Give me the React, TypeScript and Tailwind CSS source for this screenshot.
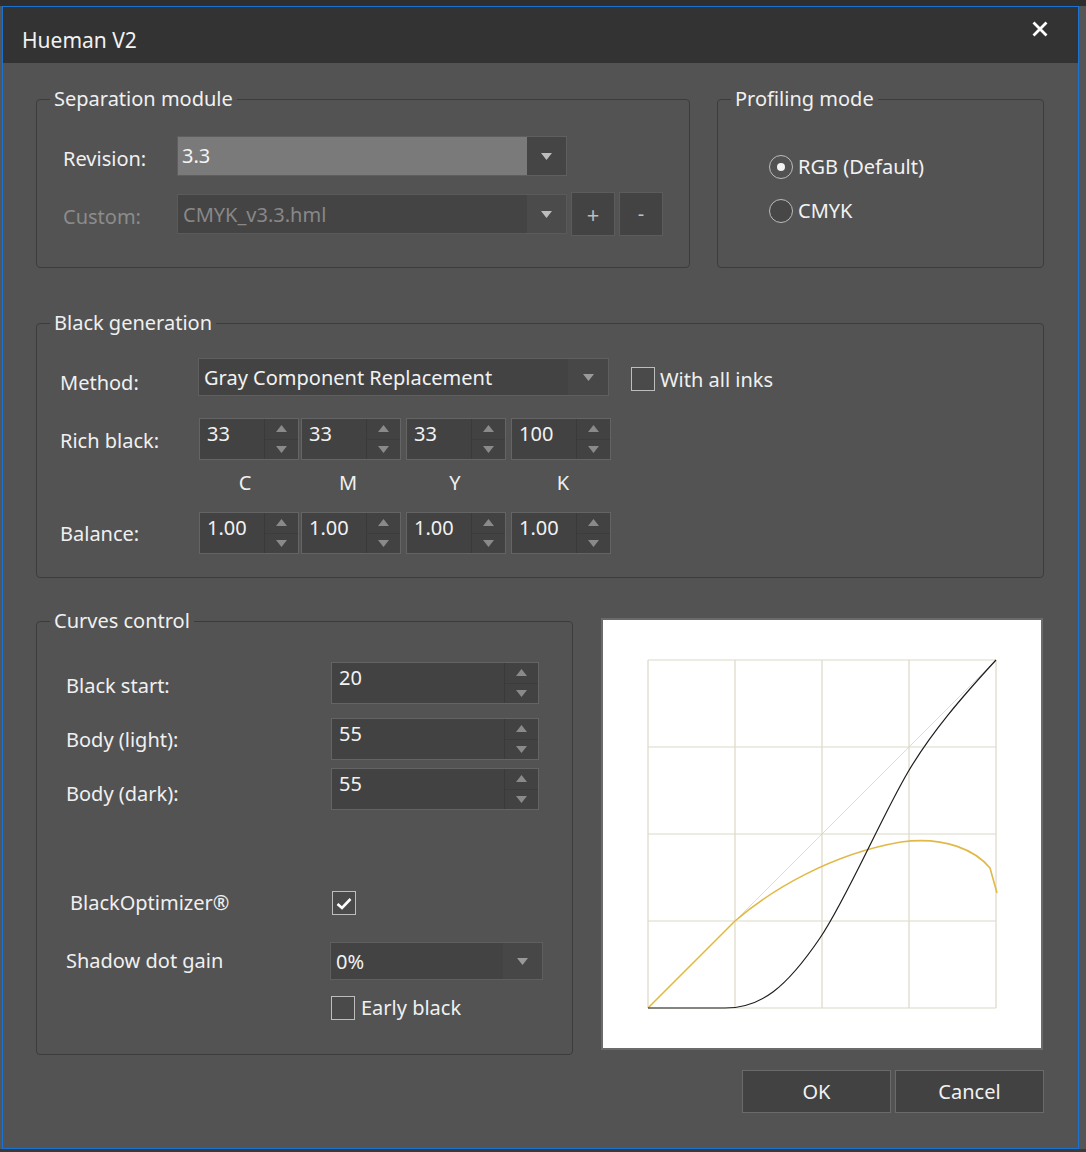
import React from "react";

function Tri({ up = false, color = "#bdbdbd" }: { up?: boolean; color?: string }) {
  return (
    <svg width="11" height="7" viewBox="0 0 11 7">
      <path d={up ? "M0 7 L5.5 0 L11 7 Z" : "M0 0 L11 0 L5.5 7 Z"} fill={color} />
    </svg>
  );
}

function Spin({ value, className = "w-[100px]" }: { value: string; className?: string }) {
  return (
    <div className={`h-[42px] flex border border-[#646464] bg-[#424242] ${className}`}>
      <div className="flex-1 pl-[7px] pt-[1px] text-[20px] leading-[28px] text-[#f2f2f2]">{value}</div>
      <div className="w-[34px] flex flex-col border-l border-[#3a3a3a]">
        <div className="flex-1 flex items-center justify-center border-b border-[#3c3c3c]">
          <Tri up color="#8a8a8a" />
        </div>
        <div className="flex-1 flex items-center justify-center">
          <Tri color="#8a8a8a" />
        </div>
      </div>
    </div>
  );
}

function Check({ checked = false }: { checked?: boolean }) {
  return (
    <div className="w-[24px] h-[24px] border border-[#bdbdbd] bg-[#4a4a4a] flex items-center justify-center">
      {checked && (
        <svg width="16" height="13" viewBox="0 0 16 13">
          <path d="M1.5 7 L6 11 L14.5 2" stroke="#ffffff" strokeWidth="2.6" fill="none" />
        </svg>
      )}
    </div>
  );
}

function Radio({ checked = false, label }: { checked?: boolean; label: string }) {
  return (
    <div className="flex items-center h-[24px]">
      <div
        className={`w-[24px] h-[24px] rounded-full border border-[#bdbdbd] flex items-center justify-center ${
          checked ? "bg-[#525252]" : "bg-[#474747]"
        }`}
      >
        {checked && <div className="w-[8px] h-[8px] rounded-full bg-[#f2f2f2]" />}
      </div>
      <span className="ml-[5px] text-[20px] leading-[24px] text-[#f2f2f2]">{label}</span>
    </div>
  );
}

function Group({
  title,
  className,
  children,
}: {
  title: string;
  className: string;
  children: React.ReactNode;
}) {
  return (
    <fieldset className={`border border-[#3c3c3c] rounded-[4px] ${className}`}>
      <legend className="ml-[13px] px-[4px] text-[20px] leading-[24px] text-[#f0f0f0]">{title}</legend>
      {children}
    </fieldset>
  );
}

const label = "text-[20px] leading-[24px] text-[#f0f0f0]";

export default function App() {
  const rich = ["33", "33", "33", "100"];
  const bal = ["1.00", "1.00", "1.00", "1.00"];
  const gaps = ["", "ml-[2px]", "ml-[5px]", "ml-[5px]"];
  const letters = [
    { c: "C", cls: "pr-[8px]" },
    { c: "M", cls: "ml-[2px] pr-[6px]" },
    { c: "Y", cls: "ml-[5px] pr-[2px]" },
    { c: "K", cls: "ml-[5px] pl-[4px]" },
  ];

  return (
    <div className="w-[1086px] h-[1152px] bg-[#555555] flex flex-col font-['Noto_Sans',sans-serif]">
      <div className="h-[6px] bg-[#2e2e2e] shrink-0" />
      <div className="ml-[2px] w-[1077px] h-[1143px] shrink-0 border border-[#1a73d0] flex flex-col bg-[#535353]">
        {/* title bar */}
        <div className="h-[56px] bg-[#333333] flex justify-between shrink-0">
          <div className="pl-[19px] pt-[21px] text-[21px] leading-[24px] text-[#f2f2f2]">Hueman V2</div>
          <div className="pr-[30px] pt-[14px]">
            <svg width="16" height="16" viewBox="0 0 16 16">
              <path d="M1.5 1.5 L14.5 14.5 M14.5 1.5 L1.5 14.5" stroke="#ffffff" strokeWidth="2.8" />
            </svg>
          </div>
        </div>

        <div className="pl-[33px] pt-[24px] flex flex-col">
          {/* row 1 */}
          <div className="flex">
            <Group title="Separation module" className="w-[654px] h-[181px]">
              <div className="pl-[26px] pt-[25px] flex flex-col">
                <div className="flex items-center h-[40px]">
                  <div className={`w-[114px] pt-[5px] ${label}`}>Revision:</div>
                  <div className="w-[390px] h-[40px] flex border border-[#5f5f5f]">
                    <div className="flex-1 bg-[#7a7a7a] pl-[4px] pt-[1px] text-[20px] leading-[36px] text-[#f4f4f4]">3.3</div>
                    <div className="w-[39px] bg-[#454545] flex items-center justify-center">
                      <Tri />
                    </div>
                  </div>
                </div>
                <div className="flex items-center h-[44px] mt-[16px]">
                  <div className="w-[114px] pt-[6px] text-[20px] leading-[24px] text-[#8c8c8c]">Custom:</div>
                  <div className="w-[390px] h-[40px] flex border border-[#5a5a5a] bg-[#444444]">
                    <div className="flex-1 pl-[5px] pt-[1px] text-[20px] leading-[38px] text-[#888888]">CMYK_v3.3.hml</div>
                    <div className="w-[39px] bg-[#4b4b4b] flex items-center justify-center">
                      <Tri />
                    </div>
                  </div>
                  <div className="ml-[4px] w-[44px] h-[44px] bg-[#434343] border border-[#5c5c5c] flex items-center justify-center text-[22px] text-[#bdbdbd]">
                    +
                  </div>
                  <div className="ml-[4px] w-[44px] h-[44px] bg-[#434343] border border-[#5c5c5c] flex items-center justify-center text-[20px] text-[#bdbdbd]">
                    -
                  </div>
                </div>
              </div>
            </Group>

            <Group title="Profiling mode" className="ml-[27px] w-[327px] h-[181px]">
              <div className="pl-[51px] pt-[44px] flex flex-col gap-[20px]">
                <Radio checked label="RGB (Default)" />
                <Radio label="CMYK" />
              </div>
            </Group>
          </div>

          {/* row 2 */}
          <Group title="Black generation" className="mt-[43px] w-[1008px] h-[267px]">
            <div className="pl-[23px] pt-[23px] flex flex-col">
              <div className="flex items-center h-[38px]">
                <div className={`w-[138px] pt-[11px] ${label}`}>Method:</div>
                <div className="w-[411px] h-[38px] flex border border-[#5f5f5f] bg-[#434343]">
                  <div className="flex-1 pl-[5px] pt-[1px] text-[20px] leading-[36px] text-[#f2f2f2]">Gray Component Replacement</div>
                  <div className="w-[40px] bg-[#474747] flex items-center justify-center">
                    <Tri color="#9a9a9a" />
                  </div>
                </div>
                <div className="ml-[22px] mt-[4px]">
                  <Check />
                </div>
                <span className={`ml-[5px] mt-[6px] ${label}`}>With all inks</span>
              </div>

              <div className="flex items-center h-[42px] mt-[22px]">
                <div className={`w-[139px] pt-[4px] ${label}`}>Rich black:</div>
                {rich.map((v, i) => (
                  <Spin key={i} value={v} className={`w-[100px] ${gaps[i]}`} />
                ))}
              </div>

              <div className="flex items-center h-[52px] pl-[139px] pb-[6px]">
                {letters.map((l) => (
                  <div key={l.c} className={`w-[100px] text-center ${label} ${l.cls}`}>
                    {l.c}
                  </div>
                ))}
              </div>

              <div className="flex items-center h-[42px]">
                <div className={`w-[139px] pt-[2px] ${label}`}>Balance:</div>
                {bal.map((v, i) => (
                  <Spin key={i} value={v} className={`w-[100px] ${gaps[i]}`} />
                ))}
              </div>
            </div>
          </Group>

          {/* row 3 */}
          <div className="flex items-start mt-[31px]">
            <Group title="Curves control" className="w-[537px] h-[446px]">
              <div className="pl-[29px] pt-[29px] flex flex-col">
                <div className="flex items-center">
                  <div className={`w-[265px] pt-[6px] ${label}`}>Black start:</div>
                  <Spin value="20" className="w-[208px]" />
                </div>
                <div className="flex items-center mt-[14px]">
                  <div className={`w-[265px] pt-[2px] ${label}`}>Body (light):</div>
                  <Spin value="55" className="w-[208px]" />
                </div>
                <div className="flex items-center mt-[8px]">
                  <div className={`w-[265px] pt-[10px] ${label}`}>Body (dark):</div>
                  <Spin value="55" className="w-[208px]" />
                </div>

                <div className="flex items-center mt-[81px]">
                  <div className={`w-[266px] pl-[4px] ${label}`}>BlackOptimizer®</div>
                  <Check checked />
                </div>

                <div className="flex items-center mt-[27px]">
                  <div className={`w-[264px] ${label}`}>Shadow dot gain</div>
                  <div className="w-[213px] h-[38px] flex border border-[#5f5f5f] bg-[#434343]">
                    <div className="flex-1 pl-[5px] pt-[1px] text-[20px] leading-[36px] text-[#f2f2f2]">0%</div>
                    <div className="w-[39px] bg-[#474747] flex items-center justify-center">
                      <Tri color="#9a9a9a" />
                    </div>
                  </div>
                </div>

                <div className="flex items-center mt-[15px] pl-[265px]">
                  <Check />
                  <span className={`ml-[6px] pt-[1px] ${label}`}>Early black</span>
                </div>
              </div>
            </Group>

            <div className="ml-[28px] mt-[9px] w-[442px] h-[432px] bg-white border-2 border-[#6b6b6b]">
              <svg width="438" height="428" viewBox="2 2 438 428">
                <g stroke="#dcd9c6" strokeWidth="1.2" fill="none">
                  {[0, 1, 2, 3, 4].map((i) => (
                    <line key={"v" + i} x1={47 + i * 87} y1={42} x2={47 + i * 87} y2={390} />
                  ))}
                  {[0, 1, 2, 3, 4].map((i) => (
                    <line key={"h" + i} x1={47} y1={42 + i * 87} x2={395} y2={42 + i * 87} />
                  ))}
                </g>
                <line x1="47" y1="390" x2="395" y2="42" stroke="#d6d4c8" strokeWidth="0.8" />
                <path
                  d="M47 390 L134 303 C170 272 230 236 300 224 C345 218 375 233 389 250 L396 275"
                  stroke="#e2b948"
                  strokeWidth="1.6"
                  fill="none"
                />
                <path
                  d="M47 390 L124 390 C160 390 185 370 219 320 C245 282 280 200 307 154 C330 115 360 80 395 42"
                  stroke="#1e1e1e"
                  strokeWidth="1.2"
                  fill="none"
                />
              </svg>
            </div>
          </div>

          {/* buttons */}
          <div className="w-[1008px] flex justify-end gap-[4px] mt-[15px]">
            <div className="w-[149px] h-[43px] bg-[#424242] border border-[#6a6a6a] flex items-center justify-center text-[20px] text-[#f2f2f2]">
              OK
            </div>
            <div className="w-[149px] h-[43px] bg-[#424242] border border-[#6a6a6a] flex items-center justify-center text-[20px] text-[#f2f2f2]">
              Cancel
            </div>
          </div>
        </div>
      </div>
      <div className="flex-1 bg-[#3a3a3a]" />
    </div>
  );
}
